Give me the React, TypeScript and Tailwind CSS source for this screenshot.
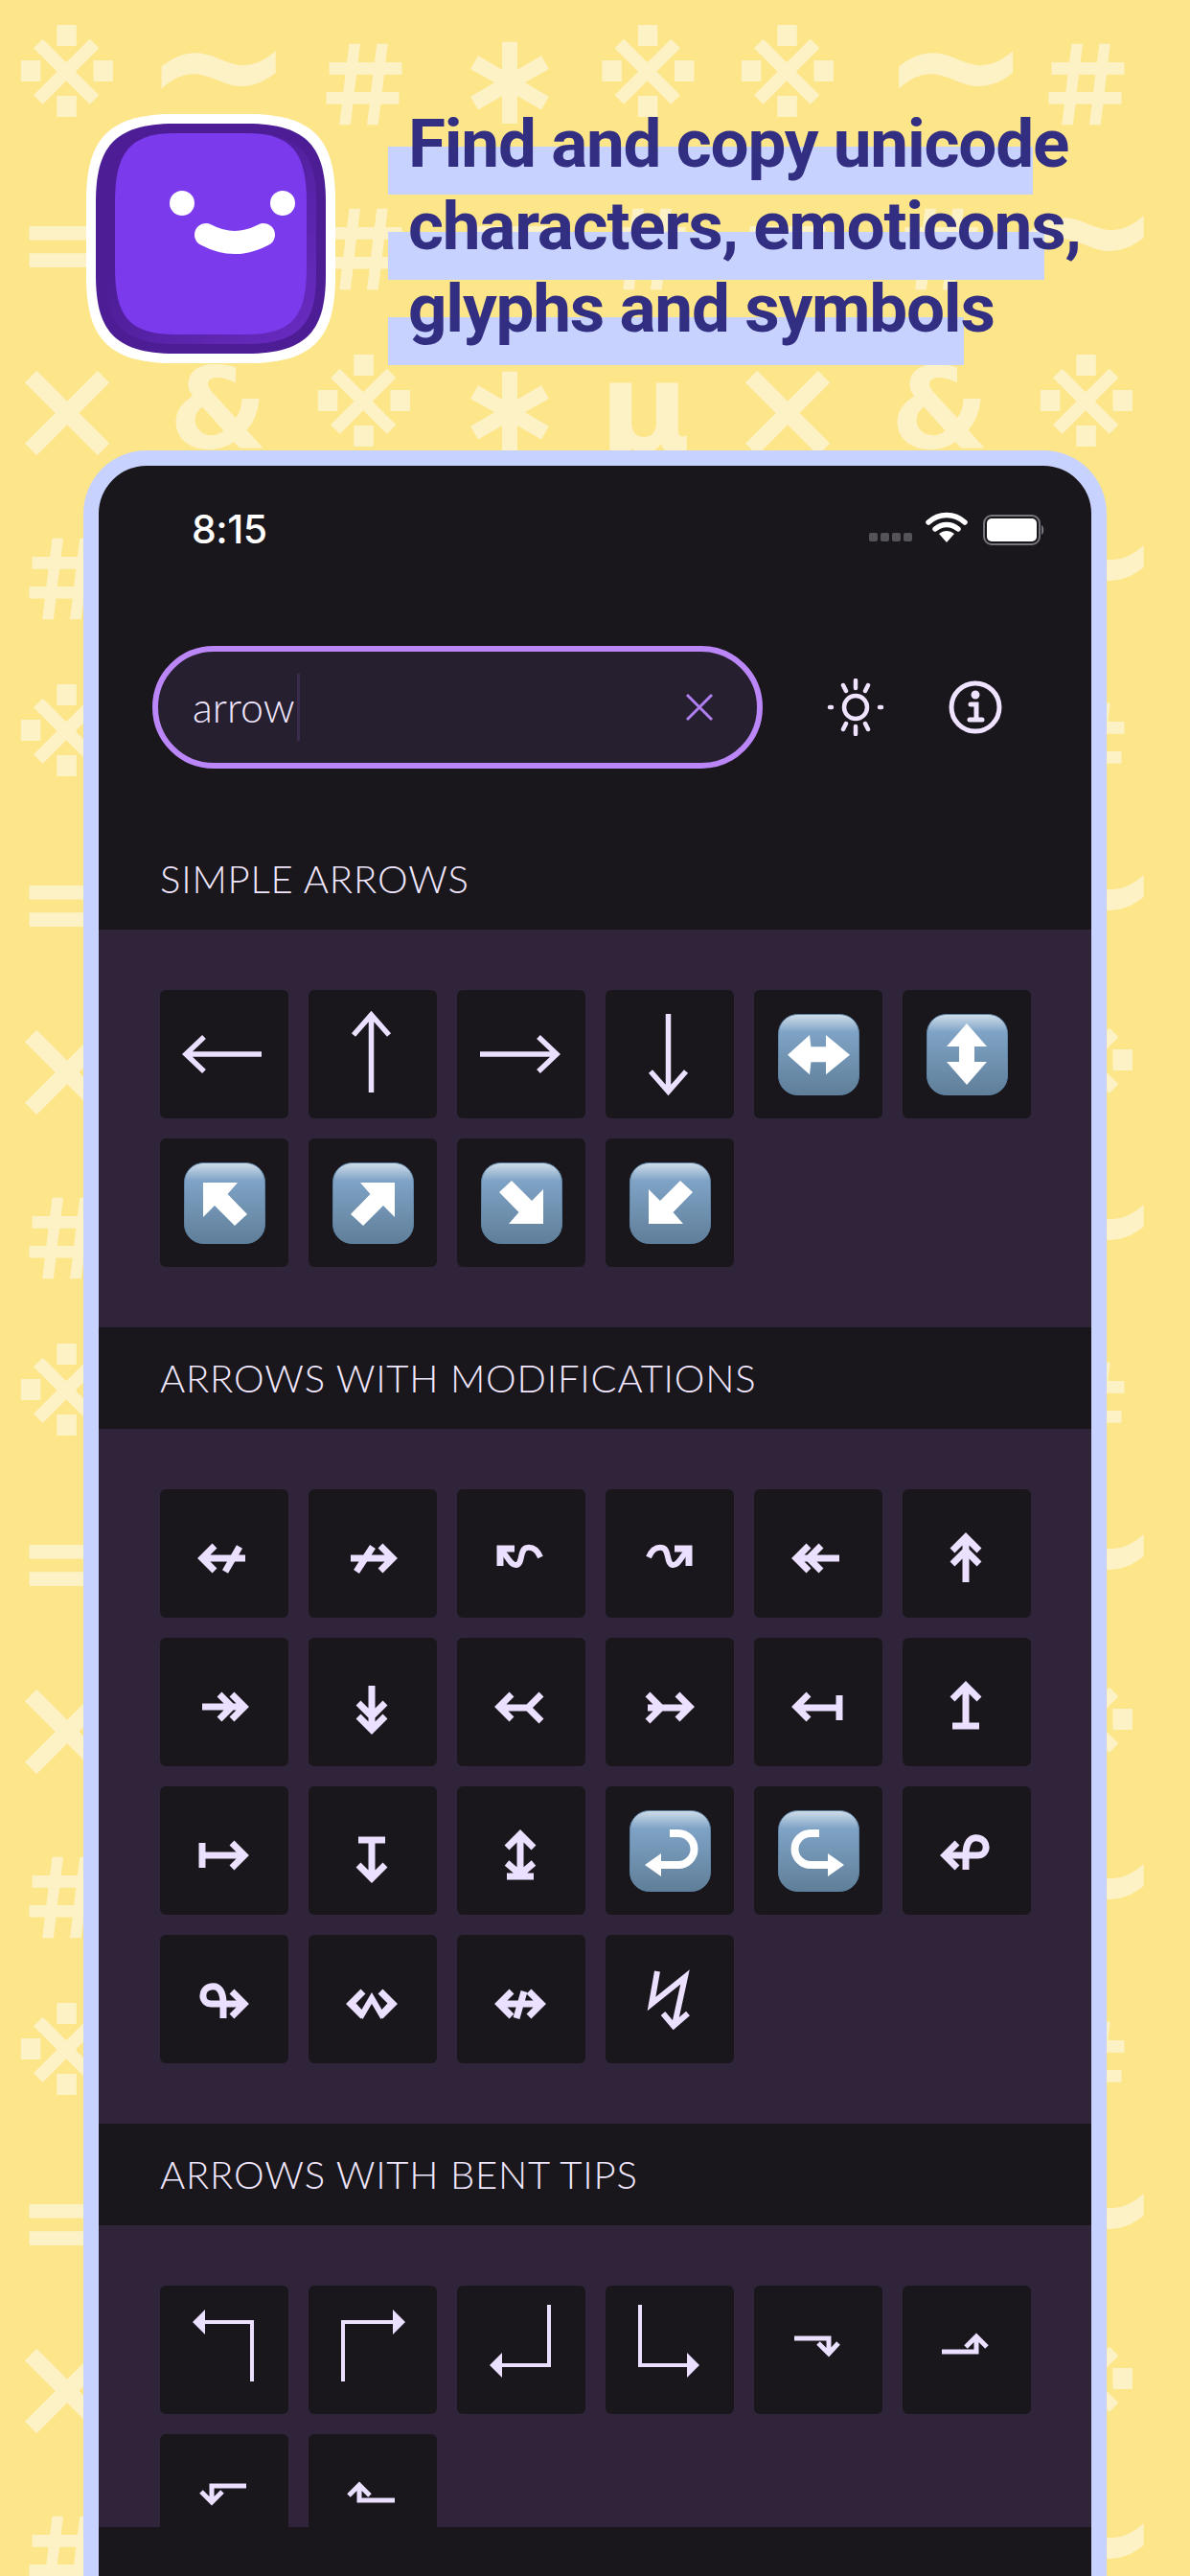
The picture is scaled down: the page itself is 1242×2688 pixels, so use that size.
import type { ReactNode } from "react";

const pattern = [
  ["※", "~", "＃", "∗", "※", "※", "~", "＃"],
  ["=", "~", "＃", "=", "＃", "=", "＃", "~"],
  ["×", "&", "※", "∗", "μ", "×", "&", "※"],
  ["＃", "=", "※", "~", "＃", "=", "※", "~"],
];

const glyphStyle: Record<string, string> = {
  "※": "font-['DejaVu_Sans',sans-serif] text-[116px]",
  "~": "relative -top-[14px] font-['DejaVu_Sans',sans-serif] text-[190px]",
  "＃": "font-['Noto_Sans_CJK_JP',sans-serif] font-black text-[112px]",
  "=": "font-['DejaVu_Sans',sans-serif] text-[126px]",
  "×": "font-['DejaVu_Sans',sans-serif] text-[150px]",
  "∗": "font-['DejaVu_Sans',sans-serif] text-[136px]",
  "&": "font-['DejaVu_Sans',sans-serif] text-[118px]",
  μ: "font-['DejaVu_Sans',sans-serif] text-[130px]",
};

const rows = Array.from({ length: 16 }, (_, i) => pattern[i % 4]);

function Background() {
  return (
    <div className="absolute inset-x-0 -top-[4px] text-[#fdf2c6] font-bold leading-[172px]">
      {rows.map((row, i) => (
        <div
          key={i}
          className="grid grid-cols-[140px_176px_128px_176px_106px_192px_126px_180px] h-[172px] text-center overflow-hidden"
        >
          {row.map((c, j) => (
            <span key={j} className={glyphStyle[c]}>
              {c}
            </span>
          ))}
        </div>
      ))}
    </div>
  );
}

function Logo() {
  return (
    <svg width="260" height="260" viewBox="0 0 260 260" className="shrink-0">
      <defs>
        <linearGradient id="rim" x1="0" y1="0" x2="1" y2="1">
          <stop offset="0.35" stopColor="#4c1d95" />
          <stop offset="1" stopColor="#6a2cc4" />
        </linearGradient>
      </defs>
      <path d="M90 0H170C240 0 260 30 260 90V170C260 230 240 260 170 260H90C20 260 0 230 0 170V90C0 30 20 0 90 0Z" fill="#fff" />
      <path d="M92 10H168C232 10 250 36 250 92V168C250 224 232 250 168 250H92C28 250 10 224 10 168V92C10 36 28 10 92 10Z" fill="#4c1d95" />
      <path d="M92 20H168C224 20 240 42 240 92V168C240 216 224 240 168 240H92C36 240 20 216 20 168V92C20 42 36 20 92 20Z" fill="url(#rim)" />
      <path d="M92 20H168C216 20 230 42 230 92V160C230 210 216 230 168 230H92C44 230 30 210 30 160V92C30 42 44 20 92 20Z" fill="#7c3aed" />
      <circle cx="100" cy="93" r="13" fill="#fff" />
      <circle cx="205" cy="93" r="13" fill="#fff" />
      <path d="M125 126Q155 142 185 126" fill="none" stroke="#fff" strokeWidth="24" strokeLinecap="round" />
    </svg>
  );
}

const titleLines = [
  { text: "Find and copy unicode", band: "top-[46px] w-[673px]" },
  { text: "characters, emoticons,", band: "top-[49px] w-[685px]" },
  { text: "glyphs and symbols", band: "top-[52px] w-[601px]" },
];

function Title() {
  return (
    <h1 className="font-['Roboto',sans-serif] font-bold text-[71px] leading-[86px] tracking-[-1.2px] text-[#322f82]">
      {titleLines.map((l) => (
        <div key={l.text} className="relative h-[86px] whitespace-nowrap">
          <span className={`absolute -left-[21px] h-[50px] bg-[#c8d2fe] ${l.band}`} />
          <span className="relative">{l.text}</span>
        </div>
      ))}
    </h1>
  );
}

function StatusBar() {
  return (
    <div className="flex items-center h-[134px] pl-[97px] pr-[48px] text-white">
      <span className="font-['Inter',sans-serif] font-medium text-[41px] tracking-[-0.5px]">8:15</span>
      <div className="ml-auto flex items-center">
        <svg width="46" height="10" viewBox="0 0 46 10" className="mt-[16px] mr-[13px]">
          {[0, 12, 24, 36].map((x) => (
            <rect key={x} x={x} y="0" width="9" height="9" rx="2" fill="#55535a" />
          ))}
        </svg>
        <svg width="44" height="32" viewBox="0 0 44 32" className="mr-[16px] -mt-[6px]">
          <path d="M3 11C14 1 30 1 41 11M10 18C17 12 27 12 34 18" fill="none" stroke="#fff" strokeWidth="5.5" strokeLinecap="round" />
          <path d="M22 32L14 23C19 19 25 19 30 23Z" fill="#fff" />
        </svg>
        <svg width="65" height="32" viewBox="0 0 65 32">
          <rect x="1" y="1" width="58" height="30" rx="8" fill="none" stroke="#77757c" strokeWidth="2" />
          <rect x="4" y="4" width="52" height="24" rx="5" fill="#fff" />
          <path d="M61 11C64 12 64 20 61 21Z" fill="#77757c" />
        </svg>
      </div>
    </div>
  );
}

function SearchRow() {
  return (
    <div className="flex items-center pl-[56px] mt-[54px]">
      <div className="w-[637px] h-[128px] rounded-full border-[6px] border-[#bb86f8] bg-[#261f30] flex items-center pl-[36px] pr-[45px]">
        <span className="font-['Lato',sans-serif] font-light text-[43px] text-[#f1e7ff]">arrow</span>
        <span className="w-[3px] h-[70px] bg-[#3a2b4f] ml-[2px]" />
        <svg width="30" height="30" viewBox="0 0 30 30" className="ml-auto">
          <path d="M2 2L28 28M28 2L2 28" stroke="#b07fef" strokeWidth="3" />
        </svg>
      </div>
      <svg width="60" height="60" viewBox="0 0 60 60" className="ml-[67px]" fill="none" stroke="#efe3ff" strokeWidth="4.5" strokeLinecap="round">
        <circle cx="30" cy="30" r="12" />
        <path d="M30 2V10M30 50V58M17 7L20 13M43 7L40 13M17 53L20 47M43 53L40 47M3 30H5M55 30H57" />
      </svg>
      <svg width="56" height="56" viewBox="0 0 56 56" className="ml-[67px]" fill="none" stroke="#efe3ff" strokeWidth="5" strokeLinecap="round">
        <circle cx="28" cy="28" r="25" />
        <path d="M23 25H29V41M22 41H35" />
        <circle cx="28" cy="15" r="2" fill="#efe3ff" />
      </svg>
    </div>
  );
}

// arrows are drawn on the 134 box of a cell
const m = "matrix(-1 0 0 1 132 0)";
const left = "M57 59L44 72L57 85";
const right = "M75 59L88 72L75 85";
const up = "M52 64L66 50L80 64";
const down = "M52 82L66 96L80 82";

function Thin({ d, w = 5.5 }: { d: string; w?: number }) {
  return <path d={d} strokeWidth={w} />;
}

function Fat({ d }: { d: string }) {
  return <path d={d} strokeWidth={7} />;
}

function Tri({ points }: { points: string }) {
  return <polygon points={points} fill="#ebe0ff" stroke="none" />;
}

const squiggle = (
  <>
    <Fat d="M45 80V62H60" />
    <path d="M45 62C53 70 56 80 62 79C69 78 65 62 73 61C79 60 84 64 87 71" strokeWidth={6} />
  </>
);
const bentEnd = (
  <>
    <Fat d={left} />
    <Fat d="M46 72H78C90 72 90 56 79 54C70 52 66 60 66 72V87" />
  </>
);

function Arrow({ children }: { children: ReactNode }) {
  return (
    <svg width="134" height="134" viewBox="0 0 134 134" fill="none" stroke="#ebe0ff">
      {children}
    </svg>
  );
}

function Emoji({ children }: { children: ReactNode }) {
  return (
    <svg width="85" height="85" viewBox="0 0 85 85">
      <defs>
        <linearGradient id="key" x1="0" y1="0" x2="0" y2="1">
          <stop offset="0" stopColor="#d0deea" />
          <stop offset="0.22" stopColor="#7fa3c6" />
          <stop offset="1" stopColor="#5f7e98" />
        </linearGradient>
      </defs>
      <rect x="0.5" y="0.5" width="84" height="84" rx="20" fill="url(#key)" stroke="#5f84a5" />
      {children}
    </svg>
  );
}

const diagonal = "20,21 56,21 45.5,33 66,54 53,66 32,45 20,57";
const curl = (
  <>
    <path d="M42 24H51A16.5 16.5 0 0 1 51 57H30" fill="none" stroke="#fff" strokeWidth="8" />
    <polygon points="16,57 33,45 33,69" fill="#fff" />
  </>
);

const simple: ReactNode[] = [
  <Arrow><Thin d="M106 67H27M46 49L27 67L46 85" /></Arrow>,
  <Arrow><Thin d="M65.500 107V27M47 47L65.500 26L84 47" /></Arrow>,
  <Arrow><Thin d="M24 67H103M85 49L104 67L85 85" /></Arrow>,
  <Arrow><Thin d="M65.500 25V105M47 85L65.500 106L84 85" /></Arrow>,
  <Emoji><polygon points="10,42.700 33,22 34.500,34.300 50,34.300 50,22 75,42.700 50,63.300 50,50.300 34.500,50.300 33,63.300" fill="#fff" /></Emoji>,
  <Emoji><polygon points="42,10 21,34 34,34 34,50 21,50 42,74 63,50 50,50 50,34 63,34" fill="#fff" /></Emoji>,
  <Emoji><polygon points={diagonal} fill="#fff" /></Emoji>,
  <Emoji><polygon points={diagonal} fill="#fff" transform="matrix(-1 0 0 1 85 0)" /></Emoji>,
  <Emoji><polygon points={diagonal} fill="#fff" transform="matrix(-1 0 0 -1 85 85)" /></Emoji>,
  <Emoji><polygon points={diagonal} fill="#fff" transform="matrix(1 0 0 -1 0 85)" /></Emoji>,
];

const modified: ReactNode[] = [
  <Arrow><Fat d={`M89 72H46${left}M83 60L68 86`} /></Arrow>,
  <Arrow><Fat d={`M44 72H86${right}M67 60L50 86`} /></Arrow>,
  <Arrow>{squiggle}</Arrow>,
  <Arrow><g transform={m}>{squiggle}</g></Arrow>,
  <Arrow><Fat d={`M89 72H46${left}M70 59L57 72L70 85`} /></Arrow>,
  <Arrow><Fat d={`M66 97V52${up}M52 78L66 64L80 78`} /></Arrow>,
  <Arrow><Fat d={`M44 72H86${right}M62 59L75 72L62 85`} /></Arrow>,
  <Arrow><Fat d={`M66 50V95${down}M52 68L66 82L80 68`} /></Arrow>,
  <Arrow><Fat d={`M46 73H74${left}M88 59L74 73L88 87`} /></Arrow>,
  <Arrow><Fat d={`M44 73H86${right}M44 59L58 73L44 87`} /></Arrow>,
  <Arrow><Fat d={`M46 73H89${left}M89 60V86`} /></Arrow>,
  <Arrow><Fat d={`M66 52V90${up}M52 92H80`} /></Arrow>,
  <Arrow><Fat d={`M44 72H86${right}M44 59V85`} /></Arrow>,
  <Arrow><Fat d={`M66 54V94${down}M52 56H80`} /></Arrow>,
  <Arrow><Fat d={`M66 52V90${up}M52 80L66 92L80 80M52 94H80`} /></Arrow>,
  <Emoji>{curl}</Emoji>,
  <Emoji><g transform="matrix(-1 0 0 1 85 0)">{curl}</g></Emoji>,
  <Arrow>{bentEnd}</Arrow>,
  <Arrow><g transform={m}>{bentEnd}</g></Arrow>,
  <Arrow><Fat d={`${left}${right}`} /><path d="M46 72L56 83L66 66L76 83L86 72" strokeWidth={6} /></Arrow>,
  <Arrow><Fat d={`M46 72H86${left}${right}M70 59L62 87`} /></Arrow>,
  <Arrow><path d="M54 38L48 72L83 44L72 94M60 82L71 95L86 82" strokeWidth={6} /></Arrow>,
];

const bent: ReactNode[] = [
  <Arrow><Thin d="M46 38H96V100" w={4} /><Tri points="34,38 47,25 47,51" /></Arrow>,
  <Arrow><Thin d="M88 38H36V100" w={4} /><Tri points="101,38 88,25 88,51" /></Arrow>,
  <Arrow><Thin d="M96 20V83H46" w={4} /><Tri points="34,83 47,70 47,96" /></Arrow>,
  <Arrow><Thin d="M36 20V83H86" w={4} /><Tri points="98,83 85,70 85,96" /></Arrow>,
  <Arrow><Thin d="M42 55H78V70M67 60L78 71L88 60" w={5} /></Arrow>,
  <Arrow><Thin d="M41 69H77V54M66 64L77 53L88 64" w={5} /></Arrow>,
  <Arrow><Thin d="M90 54H54V69M43 60L54 71L65 60" w={5} /></Arrow>,
  <Arrow><Thin d="M90 69H53V54M42 64L53 53L64 64" w={5} /></Arrow>,
];

function Section({ title, items }: { title: string; items: ReactNode[] }) {
  return (
    <section>
      <h2 className="h-[106px] pl-[64px] flex items-center font-['Lato',sans-serif] font-light text-[40px] tracking-[0.8px] text-[#f1e7ff]">
        {title}
      </h2>
      <div className="bg-[#30243b] px-[64px] py-[63px] grid grid-cols-[repeat(6,134px)] gap-[21px]">
        {items.map((item, i) => (
          <div key={i} className="h-[134px] rounded-[6px] bg-[#19171c] flex items-center justify-center">
            {item}
          </div>
        ))}
      </div>
    </section>
  );
}

export default function App() {
  return (
    <div className="relative w-[1242px] h-[2688px] overflow-hidden bg-[#fde58a] flex flex-col">
      <Background />
      <header className="relative flex pl-[90px] pt-[119px] h-[470px]">
        <Logo />
        <div className="ml-[76px] -mt-[12px]">
          <Title />
        </div>
      </header>
      <div className="relative flex-1 min-h-0 mx-[87px] border-x-[16px] border-t-[16px] border-[#c8d2fe] rounded-t-[66px] bg-[#19171c] flex flex-col overflow-hidden">
        <StatusBar />
        <SearchRow />
        <div className="flex-1 min-h-0 overflow-hidden mt-[62px]">
          <Section title="SIMPLE ARROWS" items={simple} />
          <Section title="ARROWS WITH MODIFICATIONS" items={modified} />
          <Section title="ARROWS WITH BENT TIPS" items={bent} />
        </div>
        <div className="h-[51px] shrink-0" />
      </div>
    </div>
  );
}
